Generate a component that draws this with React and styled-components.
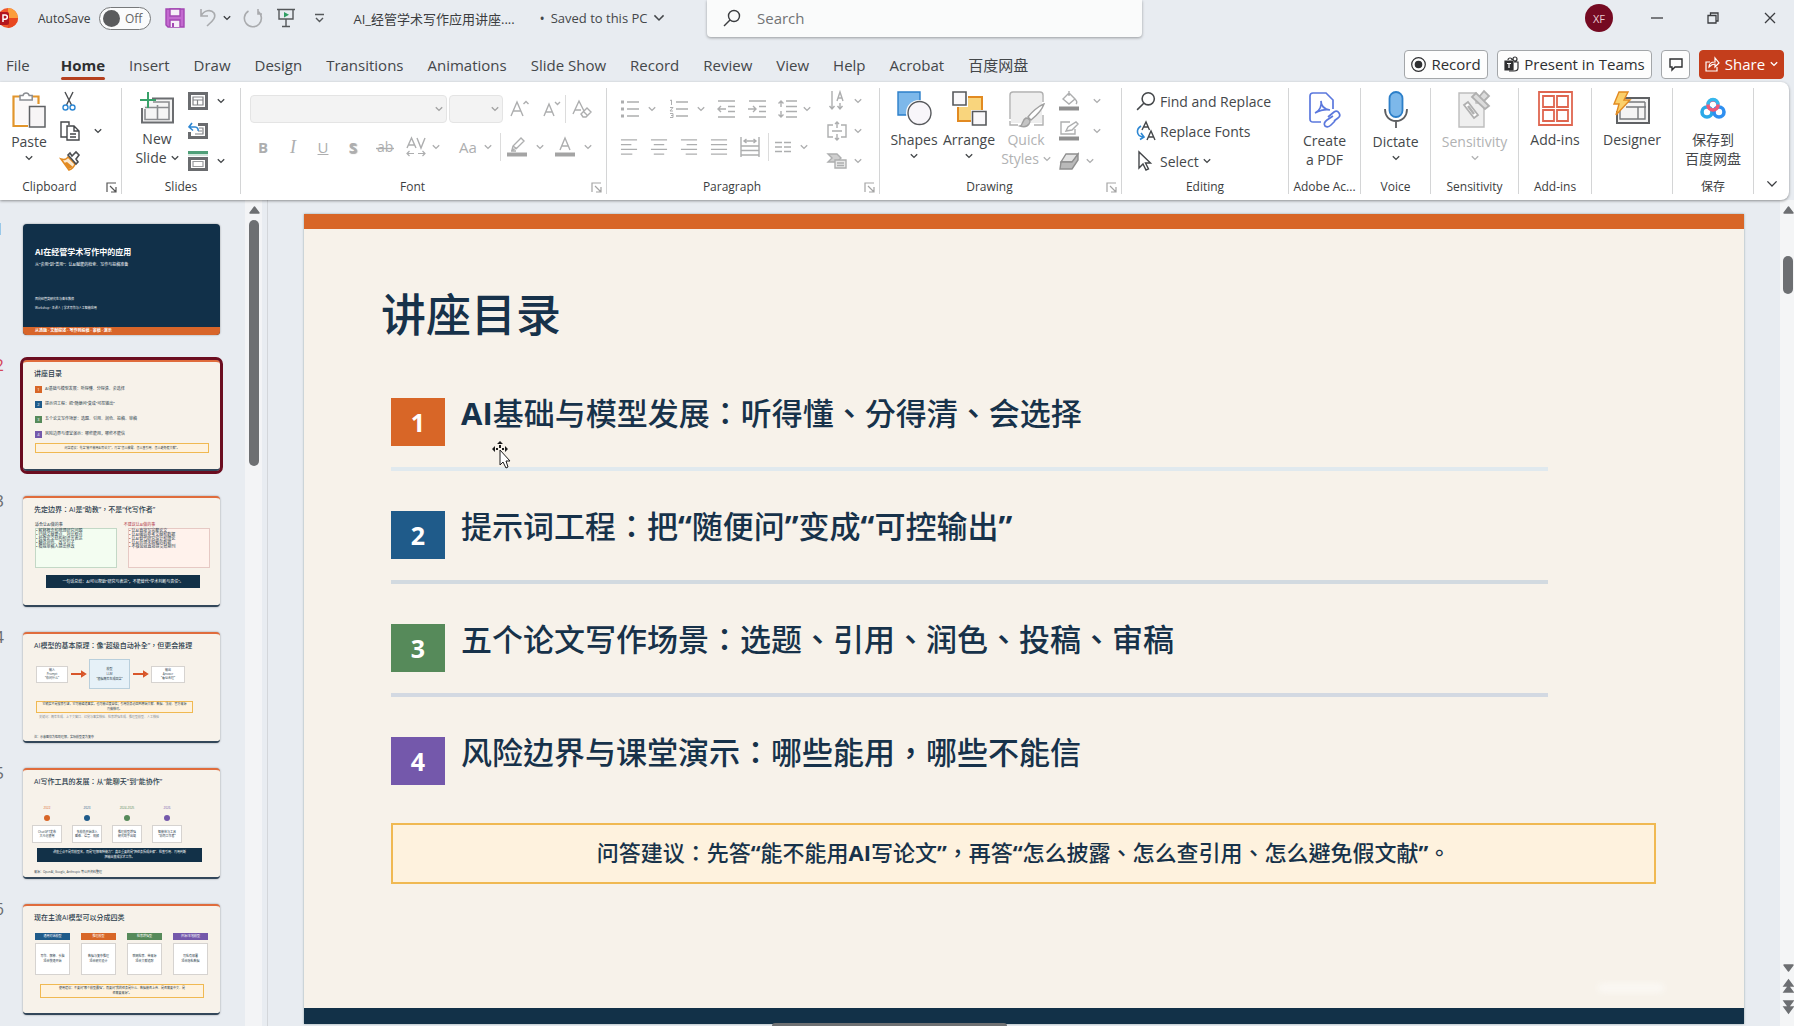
import React, {useState} from 'react'
import styled, {createGlobalStyle} from 'styled-components'

const GlobalStyle = createGlobalStyle`
  * { box-sizing: border-box; }
  body {
    margin: 0;
    overflow: hidden;
    background: #e8ecf1;
    color: #3b3d40;
    font-family: "Open Sans", "Noto Sans CJK SC", sans-serif;
    font-size: 14px;
  }
  button, input, select { font: inherit; color: inherit; }
  button { border: 0; padding: 0; background: none; }
  svg { display: block; flex: none; overflow: visible; }
`

const Window = styled.div`
  display: flex;
  flex-direction: column;
  height: 100vh;
`

/* title bar */
const TitleBar = styled.header`
  display: grid;
  grid-template-columns: 707px minmax(200px, 435px) 1fr;
  height: 46px;
  align-items: start;
`
const TitleLeft = styled.div`
  display: flex;
  align-items: center;
  height: 36px;
  font-size: 13px;
  white-space: nowrap;
`
const AutoSave = styled.label`
  display: flex;
  align-items: center;
  gap: 9px;
  margin: 0 14px 0 20px;
  font-size: 12px;
`
const Switch = styled.span`
  position: relative;
  display: flex;
  align-items: center;
  justify-content: flex-end;
  width: 52px;
  height: 23px;
  padding-right: 8px;
  border: 1px solid #77797b;
  border-radius: 12px;
  background: #fafbfc;
  color: #666;
  input {
    position: absolute;
    left: 3px;
    top: 2px;
    width: 17px;
    height: 17px;
    margin: 0;
    border-radius: 50%;
    background: #5a5b5d;
    appearance: none;
  }
`
const QuickButton = styled.button`
  display: flex;
  align-items: center;
  justify-content: center;
  width: ${p => p.$w || 20}px;
  height: 28px;
  margin-right: ${p => p.$gap || 0}px;
`
const DocName = styled.span`
  width: 186px;
`
const SearchBox = styled.label`
  display: flex;
  align-items: center;
  gap: 14px;
  height: 37px;
  padding: 0 0 2px 16px;
  border-radius: 0 0 4px 4px;
  background: #fafbfb;
  box-shadow: 0 1px 3px rgba(0, 0, 0, 0.35);
  input {
    flex: 1;
    min-width: 0;
    border: 0;
    background: none;
    outline: none;
    font-size: 15px;
    &::placeholder { color: #727476; opacity: 1; }
  }
`
const WindowControls = styled.div`
  display: flex;
  justify-content: flex-end;
  align-items: center;
  height: 36px;
  padding-right: 9px;
`
const Avatar = styled.button`
  width: 28px;
  height: 28px;
  margin-right: 29px;
  border-radius: 50%;
  background: #750a22;
  color: #e8ccd2;
  font-size: 11px;
`
const ControlButton = styled.button`
  display: flex;
  justify-content: center;
  width: 30px;
  margin-left: ${p => p.$gap || 0}px;
`

/* tabs */
const TabBar = styled.nav`
  display: flex;
  align-items: center;
  justify-content: space-between;
  height: 36px;
  padding: 0 10px 0 6px;
`
const Tabs = styled.div`
  display: flex;
  align-items: flex-end;
  gap: 24px;
  height: 36px;
  padding-bottom: 2px;
`
const Tab = styled.button`
  height: 27px;
  white-space: nowrap;
  font-size: 15px;
  line-height: 24px;
  font-weight: ${p => (p.$active ? 700 : 400)};
  color: ${p => (p.$active ? '#2e2f31' : '#44474a')};
  &:first-child { padding-right: 7px; }
  &::after {
    content: "";
    display: block;
    height: 3px;
    border-radius: 2px;
    background: ${p => (p.$active ? '#b5401f' : 'transparent')};
  }
`
const TabActions = styled.div`
  display: flex;
  gap: 9px;
`
const ActionButton = styled.button`
  display: flex;
  align-items: center;
  justify-content: center;
  gap: 5px;
  width: ${p => p.$w}px;
  height: 29px;
  border: 1px solid ${p => (p.$primary ? '#c43e1c' : '#a3a6a9')};
  border-radius: 4px;
  background: ${p => (p.$primary ? '#c43e1c' : '#fdfdfd')};
  color: ${p => (p.$primary ? '#fff' : '#2e2f31')};
  font-size: 15px;
  white-space: nowrap;
`

/* ribbon */
const Ribbon = styled.section`
  display: flex;
  flex: none;
  height: 118px;
  margin-right: 5px;
  padding: 6px 0;
  border-radius: 0 8px 8px 0;
  background: #fff;
  box-shadow: 0 1px 3px rgba(0, 0, 0, 0.4);
  z-index: 1;
`
const GroupBox = styled.div`
  display: flex;
  flex-direction: column;
  flex: none;
  width: ${p => p.$w}px;
  border-right: 1px solid #d4d5d6;
`
const GroupBody = styled.div`
  display: flex;
  flex: 1;
  padding-left: ${p => p.$pad || 0}px;
  justify-content: ${p => (p.$center ? 'center' : 'flex-start')};
`
const GroupFooter = styled.div`
  display: flex;
  align-items: center;
  height: 14px;
  font-size: 12px;
  line-height: 14px;
  text-align: center;
  white-space: nowrap;
  span { flex: 1; }
  button {
    display: flex;
    justify-content: flex-end;
    width: 22px;
    padding-right: 4px;
    color: ${p => (p.$dim ? '#a5a5a5' : '#555')};
  }
`
const BigButton = styled.button`
  display: flex;
  flex-direction: column;
  align-items: center;
  width: ${p => p.$w}px;
  height: 84px;
  color: ${p => (p.disabled ? '#b1b2b3' : '#44474a')};
  font-size: 14px;
  line-height: 19px;
  white-space: nowrap;
  > svg:first-child { margin: 3px 0 4px; }
  > svg:last-child { margin-top: 4px; }
`
const LabelRow = styled.span`
  display: flex;
  align-items: center;
  gap: 4px;
`
const Stack = styled.div`
  display: grid;
  grid-template-rows: repeat(3, 30px);
  align-content: start;
  width: ${p => p.$w}px;
  margin-left: ${p => p.$left || 0}px;
`
const Rows = styled.div`
  display: grid;
  grid-template-rows: 42px 34px;
  align-content: start;
`
const ToolRow = styled.div`
  display: flex;
  align-items: center;
`
const Tool = styled.button`
  display: flex;
  align-items: center;
  gap: ${p => p.$gap || 7}px;
  width: ${p => p.$w}px;
  height: 26px;
  color: ${p => (p.disabled ? '#adaeaf' : '#44474a')};
  font-size: 14px;
  white-space: nowrap;
`
const Glyph = styled.span`
  min-width: 26px;
  text-align: center;
  font-size: ${p => p.$size || 15}px;
  font-weight: ${p => (p.$bold ? 700 : 400)};
  font-style: ${p => (p.$italic ? 'italic' : 'normal')};
  font-family: ${p => (p.$italic ? '"Liberation Serif", serif' : 'inherit')};
  text-decoration: ${p => p.$line || 'none'};
  text-shadow: ${p => (p.$shadow ? '1px 1px 1px #aaa' : 'none')};
`
const Rule = styled.span`
  width: 1px;
  height: 28px;
  margin-right: 6px;
  background: #dcdcdc;
`
const SelectWrap = styled.span`
  position: relative;
  width: ${p => p.$w}px;
  height: 28px;
  margin-right: ${p => p.$gap}px;
  select {
    width: 100%;
    height: 100%;
    border: 1px solid #d9d9d9;
    border-radius: 4px;
    background: #eeeeee;
    appearance: none;
  }
  svg { position: absolute; right: 4px; top: 11px; color: #a2a2a2; pointer-events: none; }
`
const RibbonEnd = styled.div`
  display: flex;
  flex: 1;
  align-items: flex-end;
  justify-content: center;
  padding-bottom: 6px;
`

/* workspace */
const Workspace = styled.main`
  display: grid;
  grid-template-columns: 245px 23px 1fr 14px;
  flex: 1;
  min-height: 0;
`
const ThumbList = styled.ol`
  display: flex;
  flex-direction: column;
  gap: 25px;
  margin: 0;
  padding: 24px 0 0;
  overflow: hidden;
  list-style: none;
`
const ThumbItem = styled.li`
  display: grid;
  grid-template-columns: 4px 197px;
  column-gap: 19px;
  flex: none;
  height: 111px;
`
const ThumbNumber = styled.span`
  display: flex;
  justify-content: flex-end;
  height: 18px;
  font-size: 17px;
  line-height: 10px;
  color: ${p => (p.$active ? '#d5485a' : '#6b6d70')};
`
const Thumb = styled.button`
  display: flex;
  flex-direction: column;
  height: 111px;
  overflow: hidden;
  border-top: ${p => (p.$dark ? 0 : 2)}px solid #e06c3c;
  border-bottom: ${p => (p.$dark ? 0 : 2)}px solid #33475a;
  border-radius: 4px;
  background: ${p => (p.$dark ? '#113049' : '#f7f2ea')};
  color: ${p => (p.$dark ? '#fff' : '#2c3d4c')};
  text-align: left;
  white-space: nowrap;
  box-shadow: 0 0 2px rgba(0, 0, 0, 0.4);
  outline: ${p => (p.$active ? '3px solid #6b0d20' : 'none')};
`
const MiniTitle = styled.span`
  height: 14px;
  margin: ${p => p.$top || 6}px 0 0 ${p => p.$left || 11}px;
  font-family: "Open Sans", "Noto Sans CJK TC", sans-serif;
  font-size: ${p => p.$size || 7}px;
  line-height: 12px;
  font-weight: ${p => (p.$bold ? 700 : 500)};
`
const MiniText = styled.span`
  display: block;
  margin: ${p => p.$top || 0}px 0 0 ${p => p.$left || 0}px;
  font-size: ${p => p.$size || 4}px;
  line-height: ${p => p.$lh || 5}px;
  color: ${p => p.$color || 'inherit'};
  text-align: ${p => (p.$center ? 'center' : 'left')};
`
const MiniStrip = styled.span`
  height: 8px;
  margin-top: auto;
  padding-left: 12px;
  background: #d8652a;
  font-size: 4px;
  line-height: 8px;
  font-weight: 700;
`
const MiniRow = styled.span`
  display: flex;
  align-items: ${p => p.$align || 'flex-start'};
  gap: ${p => p.$gap}px;
  margin: ${p => p.$top || 0}px 0 0 ${p => p.$left || 12}px;
`
const MiniBadge = styled.span`
  width: 7px;
  height: 7px;
  background: ${p => p.$color};
  color: #fff;
  font-size: 4px;
  line-height: 7px;
  text-align: center;
`
const MiniBox = styled.span`
  flex: none;
  display: flex;
  flex-direction: column;
  justify-content: ${p => (p.$start ? 'flex-start' : 'center')};
  width: ${p => p.$w}px;
  height: ${p => p.$h}px;
  margin: ${p => p.$top || 0}px 0 0 ${p => p.$left || 0}px;
  border: 1px solid ${p => p.$line || '#d6d3d0'};
  background: ${p => p.$bg || '#fff'};
  color: ${p => p.$color || 'inherit'};
`
const Dot = styled.span`
  width: 6px;
  height: 6px;
  border-radius: 50%;
  background: ${p => p.$color};
`
const MiniColumn = styled.span`
  display: flex;
  flex-direction: column;
  align-items: center;
  justify-content: flex-end;
  gap: ${p => p.$gap}px;
  height: ${p => p.$h}px;
`

const ScrollTrack = styled.div`
  display: flex;
  flex-direction: column;
  align-items: center;
  padding: 6px ${p => p.$right || 0}px 12px ${p => p.$left || 0}px;
  border-right: ${p => (p.$edge ? '1px solid #d3d6da' : '0')};
  background: ${p => (p.$edge ? 'linear-gradient(90deg, #f3f4f6 17px, #e8ecf1 17px)' : '#f4f5f6')};
  color: #6d6f72;
`
const ScrollThumb = styled.div`
  width: 10px;
  height: ${p => p.$h}px;
  margin: ${p => p.$top}px 0 auto;
  border-radius: 5px;
  background: #6d6f72;
`
const ScrollArrows = styled.div`
  display: flex;
  flex-direction: column;
  gap: 7px;
`

const Canvas = styled.section`
  position: relative;
  padding: 14px 36px 0;
  overflow: hidden;
`
const Slide = styled.article`
  position: relative;
  display: flex;
  flex-direction: column;
  aspect-ratio: 16 / 9;
  border-top: 15px solid #d86627;
  border-bottom: 16px solid #123148;
  background: #f7f2ea;
  color: #17324a;
  font-family: "Open Sans", "Noto Sans CJK TC", sans-serif;
  box-shadow: 0 0 2px rgba(60, 90, 90, 0.5);
`
const SlideTitle = styled.h1`
  margin: 54px 0 0 77px;
  font-size: 45px;
  line-height: 64px;
  font-weight: 500;
`
const Agenda = styled.ol`
  margin: 51px 196px 0 87px;
  padding: 0;
  list-style: none;
`
const AgendaItem = styled.li`
  display: flex;
  align-items: flex-start;
  gap: 16px;
  height: ${p => (p.$line ? 73 : 48)}px;
  margin-bottom: ${p => (p.$line ? 40 : 0)}px;
  border-bottom: ${p => (p.$line ? `4px solid ${p.$line}` : 0)};
  font-size: 31px;
  line-height: 30px;
  font-weight: 500;
  white-space: nowrap;
`
const Badge = styled.span`
  width: 54px;
  height: 48px;
  background: ${p => p.$color};
  color: #fff;
  font-size: 25px;
  line-height: 48px;
  font-weight: 700;
  text-align: center;
`
const Advice = styled.p`
  margin: 38px 88px 0 87px;
  height: 61px;
  border: 2px solid #f0b952;
  background: #fef2de;
  font-size: 22px;
  line-height: 54px;
  font-weight: 500;
  text-align: center;
  white-space: nowrap;
`
const Latin = styled.b`
  font-weight: 700;
`
const Watermark = styled.span`
  position: absolute;
  right: 80px;
  bottom: 16px;
  width: 66px;
  height: 8px;
  border-radius: 4px;
  background: #fff;
  opacity: 0.5;
  filter: blur(3px);
`
const Pointer = styled.svg`
  position: absolute;
  left: 188px;
  top: 212px;
`
const Handle = styled.div`
  position: absolute;
  left: 504px;
  bottom: 0;
  width: 235px;
  height: 3px;
  border-radius: 3px 3px 0 0;
  background: #6f7173;
`

/* icons */
const Svg = ({w = 20, h = w, box, sw = 1.4, children}) => (
  <svg width={w} height={h} viewBox={box || `0 0 ${w} ${h}`} fill="none" stroke="currentColor" strokeWidth={sw} aria-hidden="true">
    {children}
  </svg>
)

const Chevron = ({w = 8, sw = 1.7}) => (
  <Svg w={w} h={Math.round(w * 0.7)} box="0 0 10 7" sw={sw}><path d="M1 1.2l4 4 4-4" /></Svg>
)
const Launcher = () => (
  <Svg w={11} sw={1.2}><path d="M1 10V1h9M4 4l6 6M10 5v5H5" /></Svg>
)
const Triangle = ({down}) => (
  <Svg w={11} h={8}><path d={down ? 'M1 1h9L5.500 7z' : 'M1 7h9L5.500 1z'} fill="currentColor" strokeLinejoin="round" /></Svg>
)
const DoubleTriangle = ({down}) => (
  <Svg w={11} h={14}>
    <path d={down ? 'M1 1h9L5.500 7zM1 7h9l-4.500 6z' : 'M1 7h9L5.500 1zM1 13h9L5.500 7z'} fill="currentColor" strokeWidth="1.400" />
  </Svg>
)
const AppLogo = () => (
  <svg width="18" height="20" viewBox="0 0 18 20" aria-hidden="true">
    <circle cx="8" cy="10" r="10" fill="#f0572b" />
    <path d="M8 0a10 10 0 0 1 10 10H8z" fill="#fb9d3b" />
    <path d="M18 10a10 10 0 0 1-10 10V10z" fill="#e8471f" />
    <rect x="-4" y="4" width="13" height="13" rx="2" fill="#b3151d" />
    <path d="M3 14V7h2.200a2 2 0 0 1 0 4.200H3" fill="none" stroke="#fff" strokeWidth="1.500" />
  </svg>
)
const SaveIcon = () => (
  <Svg w={20}>
    <path d="M1 1h18v18H3l-2-2z" fill="#c36ad0" stroke="#a347b3" />
    <path d="M5 1h10v7H5z" fill="#f6eef8" stroke="#a347b3" />
    <path d="M5 19v-7h10v7" fill="#f6eef8" stroke="#a347b3" />
    <path d="M8 15v4" stroke="#a347b3" strokeWidth="2" />
  </Svg>
)
const UndoIcon = () => <Svg w={18} h={20}><path d="M2 1v7h7M2 8C5 2 12 1 15 5c3 5-3 9-7 13" stroke="#a9abae" strokeWidth="1.600" /></Svg>
const RedoIcon = () => <Svg w={20}><path d="M15 1v5h4M5.500 3A8.500 8.500 0 1 0 15 3.500" stroke="#a9abae" strokeWidth="1.600" /></Svg>
const PresentIcon = () => (
  <Svg w={18} h={20}>
    <path d="M0 1.500h18M2 2v9h14V2M9 11v7M5 18.500h8" stroke="#55585b" />
    <path d="M7 4l5 2.800L7 9.500z" fill="#2f9e63" stroke="none" />
  </Svg>
)
const CustomizeIcon = () => <Svg w={9} h={10}><path d="M0 1.500h9M1 5l3.500 3.500L8 5" stroke="#55585b" /></Svg>
const SearchIcon = ({w = 18}) => <Svg w={w} box="0 0 18 18"><circle cx="11" cy="7" r="5.500" /><path d="M7 11l-6 6" /></Svg>

const PasteIcon = () => (
  <Svg w={34} h={37} sw={1.5}>
    <path d="M16 35H1.500V5.500H8M20 5.500h6.500V13" stroke="#e2952c" strokeWidth="2.200" />
    <path d="M3.500 7.500H25V33H3.500z" fill="#fbf8f8" stroke="none" />
    <path d="M8 9V4.500h3a3.200 3.200 0 0 1 6.200 0h3V9z" fill="#fff" stroke="#8a8d92" />
    <path d="M17.500 15.500h15.500v20.500H17.500z" fill="#f7f5f6" stroke="#5f6164" />
  </Svg>
)
const CutIcon = () => (
  <Svg w={18} h={19}>
    <path d="M5 0l6.500 13M13 0L6.500 13" stroke="#4b4d50" />
    <circle cx="5.500" cy="15.500" r="2.500" stroke="#2d87d3" /><circle cx="12.500" cy="15.500" r="2.500" stroke="#2d87d3" />
  </Svg>
)
const CopyIcon = () => (
  <Svg w={20}>
    <path d="M7 16H1V1h8v3" /><path d="M7 5h7l5 5v9H7zM14 5v5h5M10 13h6M10 16h6" />
  </Svg>
)
const PainterIcon = () => (
  <Svg w={20}>
    <path d="M1 8l8 11c3-1 5-3 6-6L8 6c-1 2-4 3-7 2z" fill="#fce9cf" stroke="#e28a21" strokeWidth="1.600" />
    <path d="M4 12l5 6 4-2-6-5z" fill="#e28a21" stroke="none" />
    <path d="M8 4l8 9 2-2-2-3 3-4-3-3-4 4-2-3z" fill="#fff" stroke="#4b4d50" strokeWidth="1.600" />
  </Svg>
)
const NewSlideIcon = () => (
  <Svg w={36} h={34} sw={1.6}>
    <path d="M13 7.500h21v24H3V17" fill="#f5f5f5" stroke="#6b6d70" strokeWidth="2" />
    <path d="M18.500 14v15M6 16.500h24M6 18v10.500h24V11H14" stroke="#8a8c8f" />
    <path d="M9 1v16M1 9h16" stroke="#38a169" strokeWidth="2" />
  </Svg>
)
const LayoutIcon = () => (
  <Svg w={20} h={18}>
    <path d="M1.500 1.500h17v15h-17z" stroke="#6a6c6f" strokeWidth="3" /><path d="M5 5h10v8H5zM5 8h10M9.500 8v5" stroke="#808285" strokeWidth="1.200" />
  </Svg>
)
const ResetIcon = () => (
  <Svg w={20} h={18}>
    <path d="M10 2.500h8.500v13h-17V10" stroke="#6a6c6f" strokeWidth="3" /><path d="M11 6h4v6H7M10 9h4" stroke="#808285" strokeWidth="1.200" />
    <path d="M1 5h6a3 3 0 0 1 3 4M4 1L1 5l4 3.500" stroke="#2d87d3" strokeWidth="1.600" />
  </Svg>
)
const SectionIcon = () => (
  <Svg w={20}>
    <path d="M0 1.500h20" stroke="#4f9f78" strokeWidth="3" /><path d="M0 4h20" stroke="#a5ccb8" strokeWidth="1" />
    <path d="M1.500 7.500h17v11h-17z" stroke="#6a6c6f" strokeWidth="3" /><path d="M5 10.500h10v5H5z" stroke="#9a9c9f" strokeWidth="1.200" />
  </Svg>
)
const ClearFormatIcon = () => <Svg w={20}><path d="M1 15L7 2l5 10M3 11h6M9 15l6-6 4 4-5 5h-3zM11 12l4 4" /></Svg>
const GrowIcon = ({down}) => (
  <Svg w={20}>
    {down ? <path d="M3 17L8 5l5 12M4.500 13h7M14 3l2.500 2.500L19 3" /> : <path d="M1 17L7 3l6 14M3 12h8M13.500 5L16 2.500 18.500 5" />}
  </Svg>
)
const MarkIcon = () => (
  <Svg w={20}><path d="M0 17.500h20" strokeWidth="4" stroke="#a4a4a4" /><path d="M5 13l1-4 8-8 3 3-7 7zM6 9l4 3M4 14h5" /></Svg>
)
const FontColorIcon = () => (
  <Svg w={20}><path d="M0 17.500h20" strokeWidth="4" stroke="#a4a4a4" /><path d="M5 13l5-12 5 12M7 9h6" /></Svg>
)
const StrikeIcon = () => (
  <Svg w={18} h={20}>
    <text x="1" y="15" fontSize="14" fill="currentColor" stroke="none">ab</text><path d="M0 11.500h18" />
  </Svg>
)
const SpacingIcon = () => (
  <Svg w={20}>
    <path d="M1 11L5.500 1 10 11M2.500 8h6M11 1l4 10 4-10" />
    <path d="M1 16.500h7M12 16.500h7M3.500 14L1 16.500 3.500 19M16.500 14l2.500 2.500-2.500 2.500" strokeWidth="1.200" />
  </Svg>
)

const BulletsIcon = () => <Svg w={20}><path d="M7 3h12M7 10h12M7 17h12" /><path d="M1 3h3M1 10h3M1 17h3" strokeWidth="3" /></Svg>
const NumbersIcon = () => (
  <Svg w={20}>
    <path d="M7 3h12M7 10h12M7 17h12" />
    <path d="M1 1.500l1.500-.5v5M1 8.500h3L1 12h3M1 14.500h3v4H1M2 16.500h2" strokeWidth="1" />
  </Svg>
)
const IndentIcon = ({out}) => (
  <Svg w={19} h={18}>
    <path d="M1 1h17M11 6.500h7M11 11.500h7M1 17h17" /><path d={out ? 'M9 9H1M4 6L1 9l3 3' : 'M0 9h8M5 6l3 3-3 3'} />
  </Svg>
)
const LineSpacingIcon = () => <Svg w={20}><path d="M9 2h11M9 7.500h11M9 12.500h11M9 18h11M4 2v6M4 12v6M1.500 4.500L4 2l2.500 2.500M1.500 15.500L4 18l2.500-2.500" /></Svg>
const alignPaths = {
  left: 'M1 1.500h17M1 6.500h11M1 11.500h17M1 16.500h12',
  center: 'M1 1.500h17M4 6.500h11M1 11.500h17M4 16.500h11',
  right: 'M1 1.500h17M7 6.500h11M1 11.500h17M6 16.500h12',
  justify: 'M1 1.500h17M1 6.500h17M1 11.500h17M1 16.500h17',
}
const AlignIcon = ({kind}) => <Svg w={18} box="0 0 19 18"><path d={alignPaths[kind]} /></Svg>
const DistributeIcon = () => <Svg w={20}><path d="M1 0v20M19 0v20M4 4h12M6.500 2L4 4l2.500 2M13.500 2L16 4l-2.500 2M1 9h18M1 13.500h18M1 18h18" /></Svg>
const ColumnsIcon = () => <Svg w={16} h={12}><path d="M0 1.500h7M0 6h7M0 10.500h7M9 1.500h7M9 6h7M9 10.500h7" /></Svg>
const DirectionIcon = () => <Svg w={20}><path d="M5 0v18M2.500 15L5 18l2.500-3M13 12v6M10.500 15l2.500 3 2.500-3M10 10l3-9 3 9M11 7h4" /></Svg>
const AlignTextIcon = () => <Svg w={20} h={18}><path d="M6 3H1v12h5M14 3h5v12h-5M5 9h10M10 0v6M10 12v6M8 2l2-2 2 2M8 16l2 2 2-2" /></Svg>
const SmartArtIcon = () => (
  <Svg w={20} h={16}><path d="M1 1h9l4 4-4 4H1l4-4z" fill="#cfcfcf" /><path d="M8 7h11v8H8zM10 10h7M10 12.500h7" fill="#e9e9e9" /></Svg>
)

const ShapesIcon = () => (
  <Svg w={35}>
    <path d="M1 1h22v23H1z" fill="#7db8ea" stroke="#2c7fc9" /><circle cx="22" cy="22" r="13" fill="#fff" stroke="none" />
    <circle cx="22.500" cy="22" r="11.500" fill="#f8f6fa" stroke="#57595c" />
  </Svg>
)
const ArrangeIcon = () => (
  <Svg w={35}>
    <path d="M6 6h24v24H6z" fill="#f9d57d" stroke="#e28a21" strokeWidth="2" />
    <path d="M0 0h16v16H0zM19 19h16v16H19z" fill="#fff" stroke="none" />
    <path d="M1 1h13v13H1zM20.500 20.500h13.500v13.500H20.500z" fill="#f9f8fa" stroke="#57595c" strokeWidth="1.600" />
  </Svg>
)
const QuickStylesIcon = () => (
  <Svg w={35}>
    <path d="M2 2h31v30H2z" fill="#eeeeee" stroke="none" />
    <path d="M1 28V4q0-3 3-3h27q3 0 3 3v7M1 30v4h8M34 24v10h-9" stroke="#b0b0b0" />
    <path d="M35 13c-6 2-13 9-16 13l3 3c5-4 11-10 13-16z" fill="#fff" stroke="#a0a0a0" />
    <path d="M11 35c3-1 2-6 6-8 4 0 5 4 3 6-2 3-6 3-9 2z" fill="#c4c4c4" stroke="#a0a0a0" />
  </Svg>
)
const FillIcon = () => <Svg w={20}><path d="M0 17.500h20" strokeWidth="4" stroke="#8f8f8f" /><path d="M4 8l6-6 6 6-6 5zM10 0v5M16 8c2 2 2 4 1 5" /></Svg>
const OutlineIcon = () => <Svg w={20}><path d="M0 17.500h20" strokeWidth="4" stroke="#8f8f8f" /><path d="M11 1H2v12h14V8M7 10l2-4 8-5 2 2-6 6z" /></Svg>
const EffectsIcon = () => <Svg w={20} h={17}><path d="M7 1h12l-5 8H2z" fill="#e3e3e3" stroke="#8f8f8f" /><path d="M2 9h11l6-8v6l-6 9H1z" fill="#b9b9b9" stroke="#8f8f8f" /></Svg>
const ReplaceFontsIcon = () => (
  <Svg w={20}><path d="M6 9l4-8 3.500 8M7.500 6h4.500M11 19l4-9 4 9M12.500 16h5" /><path d="M5 5c-5 3-5 10 2 11M4 18.500L8 16l-3-4" stroke="#2d87d3" strokeWidth="1.600" /></Svg>
)
const SelectIcon = () => <Svg w={20}><path d="M3 1v16l4-4 3 6 2.500-1-3-6h5z" /></Svg>
const PdfIcon = () => (
  <Svg w={32} h={36} sw={1.7}>
    <path d="M12 31H4q-3 0-3-3V5q0-3 3-3h13l7 7v9" stroke="#5b78dd" />
    <path d="M6 22c5-2 7-8 6-12 0 5 3 8 9 9-5-1-11 1-15 3z" stroke="#5b78dd" />
    <path d="M19 26l6-5q3-2 5 1t-1 5l-4 3M24 25l-6 4q-4 3-2 6 3 2 6-1l4-4" stroke="#5b78dd" />
  </Svg>
)
const MicIcon = () => (
  <Svg w={24} h={37} sw={1.8}>
    <rect x="5.500" y="1" width="13" height="25" rx="6.500" fill="#7db8ea" stroke="#2c7fc9" />
    <path d="M1 18c0 7 4 12 11 12s11-5 11-12M12 30v7" stroke="#5c5e61" />
  </Svg>
)
const SensitivityIcon = () => (
  <Svg w={33} h={37}>
    <path d="M1 2h17v10h8v24H1z" fill="#efefef" stroke="#bdbdbd" />
    <path d="M6 14l4-3 10 13-4 3z" fill="#fff" stroke="#b0b0b0" strokeWidth="1.800" /><path d="M10 15l6 8" stroke="#b0b0b0" strokeWidth="2.500" />
    <path d="M14 6l4-4 13 13-4 3zM21 6l5-6 5 5-5 5" fill="#dcdcdc" stroke="#b0b0b0" strokeWidth="1.800" />
  </Svg>
)
const AddInsIcon = () => <Svg w={35} sw={1.8}><path d="M1 1h33v33H1zM5 5h11v11H5zM19 5h11v11H19zM5 19h11v11H5zM19 19h11v11H19z" stroke="#df6650" /></Svg>
const DesignerIcon = () => (
  <Svg w={38} h={35}>
    <path d="M12 7h24v25H4V20" fill="#f4f4f4" stroke="#5f6164" strokeWidth="2" /><path d="M14 11h18M13 16h20M7 16v12h25V11M25 16v12" stroke="#77797c" />
    <path d="M6 1h9l-4 8h6L3 24l3-11H1z" fill="#fbd06b" stroke="#e28a21" />
  </Svg>
)
const NetdiskIcon = () => (
  <Svg w={26} h={35} sw={3.6}>
    <circle cx="7" cy="21" r="5" stroke="#2aa9e8" /><circle cx="19" cy="21" r="5" stroke="#2f8ff0" />
    <circle cx="13" cy="14" r="5" stroke="#ef5a77" /><path d="M8 13.500a5 5 0 0 1 10 0" stroke="#35b8ee" />
  </Svg>
)
const RecordIcon = () => <Svg w={15} sw={1.2}><circle cx="7.500" cy="7.500" r="6.800" /><circle cx="7.500" cy="7.500" r="3.200" fill="currentColor" /></Svg>
const TeamsIcon = () => (
  <Svg w={15} h={16} sw={1.2}>
    <path d="M1 5h8v9H1z" fill="currentColor" /><path d="M4 4a2 2 0 1 1 4 0M10 6h4v6q0 3-4 3H5M9 3a2 2 0 1 0 4 0 2 2 0 0 0-4 0" />
    <path d="M3 7.500h4M5 7.500V12" stroke="#fff" />
  </Svg>
)
const CommentIcon = () => <Svg w={14} h={13}><path d="M1 1h12v8H6l-3 3V9H1z" /></Svg>
const ShareIcon = () => <Svg w={15} sw={1.2}><path d="M5 5H1v9h11v-4M4 10c0-4 3-5 6-5V1l4 5-4 4V7c-3 0-4 1-6 3z" /></Svg>

const tabs = ['File', 'Home', 'Insert', 'Draw', 'Design', 'Transitions', 'Animations', 'Slide Show', 'Record', 'Review', 'View', 'Help', 'Acrobat', '百度网盘']

const agenda = [
  {text: 'AI基础与模型发展：听得懂、分得清、会选择', color: '#d86627', line: '#e0e9ee'},
  {text: '提示词工程：把“随便问”变成“可控输出”', color: '#1f5b8a', line: '#d2dae0'},
  {text: '五个论文写作场景：选题、引用、润色、投稿、审稿', color: '#568a5a', line: '#d3d9e2'},
  {text: '风险边界与课堂演示：哪些能用，哪些不能信', color: '#7458ab'},
]
const advice = '问答建议：先答“能不能用AI写论文”，再答“怎么披露、怎么查引用、怎么避免假文献”。'

// latin letters and quotes are set bold, the CJK around them medium
const Mixed = ({children}) => (
  <span>
    {children.split(/(AI|[“”])/).map((part, i) => (i % 2 ? <Latin key={i}>{part}</Latin> : part))}
  </span>
)

const Group = ({w, label, launcher, dim, pad, center, children}) => (
  <GroupBox $w={w}>
    <GroupBody $pad={pad} $center={center}>{children}</GroupBody>
    <GroupFooter $dim={dim}>
      <span>{label}</span>
      {launcher && <button aria-label={`${label} settings`}><Launcher /></button>}
    </GroupFooter>
  </GroupBox>
)

const MenuTool = ({w, icon, label, disabled = true, gap}) => (
  <Tool $w={w} $gap={gap || 9} disabled={disabled} aria-label={label}>{icon}<Chevron /></Tool>
)

const HomeRibbon = () => (
  <Ribbon>
    <Group w={122} label="Clipboard" launcher>
      <BigButton $w={58}><PasteIcon />Paste<Chevron /></BigButton>
      <Stack $w={58} $left={2}>
        <Tool $w={24} aria-label="Cut"><CutIcon /></Tool>
        <MenuTool w={50} gap={14} icon={<CopyIcon />} label="Copy" disabled={false} />
        <Tool $w={24} aria-label="Format Painter"><PainterIcon /></Tool>
      </Stack>
    </Group>
    <Group w={119} label="Slides" pad={9}>
      <BigButton $w={52}><NewSlideIcon />New<LabelRow>Slide<Chevron /></LabelRow></BigButton>
      <Stack $w={46} $left={5}>
        <MenuTool w={44} icon={<LayoutIcon />} label="Layout" disabled={false} />
        <Tool $w={24} aria-label="Reset"><ResetIcon /></Tool>
        <MenuTool w={44} icon={<SectionIcon />} label="Section" disabled={false} />
      </Stack>
    </Group>
    <Group w={366} label="Font" launcher dim pad={9}>
      <Rows>
        <ToolRow>
          <SelectWrap $w={197} $gap={2}><select aria-label="Font name" disabled /><Chevron /></SelectWrap>
          <SelectWrap $w={54} $gap={7}><select aria-label="Font size" disabled /><Chevron /></SelectWrap>
          <Tool $w={31} disabled aria-label="Increase size"><GrowIcon /></Tool>
          <Tool $w={24} disabled aria-label="Decrease size"><GrowIcon down /></Tool>
          <Rule />
          <Tool $w={24} disabled aria-label="Clear formatting"><ClearFormatIcon /></Tool>
        </ToolRow>
        <ToolRow>
          <Tool $w={30} disabled><Glyph $bold>B</Glyph></Tool>
          <Tool $w={30} disabled><Glyph $italic $size={18}>I</Glyph></Tool>
          <Tool $w={30} disabled><Glyph $line="underline">U</Glyph></Tool>
          <Tool $w={36} disabled><Glyph $bold $shadow>S</Glyph></Tool>
          <Tool $w={30} disabled aria-label="Strikethrough"><StrikeIcon /></Tool>
          <MenuTool w={49} gap={6} icon={<SpacingIcon />} label="Character spacing" />
          <MenuTool w={45} gap={3} icon={<Glyph>Aa</Glyph>} label="Change case" />
          <Rule />
          <MenuTool w={48} icon={<MarkIcon />} label="Highlight" />
          <MenuTool w={44} icon={<FontColorIcon />} label="Font colour" />
        </ToolRow>
      </Rows>
    </Group>
    <Group w={273} label="Paragraph" launcher dim pad={13}>
      <Rows>
        <ToolRow>
          <MenuTool w={49} gap={8} icon={<BulletsIcon />} label="Bullets" />
          <MenuTool w={48} gap={8} icon={<NumbersIcon />} label="Numbering" />
          <Tool $w={31} disabled aria-label="Decrease indent"><IndentIcon out /></Tool>
          <Tool $w={29} disabled aria-label="Increase indent"><IndentIcon /></Tool>
          <MenuTool w={50} gap={6} icon={<LineSpacingIcon />} label="Line spacing" />
        </ToolRow>
        <ToolRow>
          {['left', 'center', 'right', 'justify'].map(kind => (
            <Tool key={kind} $w={30} disabled aria-label={`Align ${kind}`}><AlignIcon kind={kind} /></Tool>
          ))}
          <Tool $w={28} disabled aria-label="Distribute"><DistributeIcon /></Tool>
          <Rule />
          <MenuTool w={40} icon={<ColumnsIcon />} label="Columns" />
        </ToolRow>
      </Rows>
      <Stack $w={40}>
        <MenuTool w={40} gap={7} icon={<DirectionIcon />} label="Text direction" />
        <MenuTool w={40} gap={7} icon={<AlignTextIcon />} label="Align text" />
        <MenuTool w={40} gap={7} icon={<SmartArtIcon />} label="Convert to SmartArt" />
      </Stack>
    </Group>
    <Group w={242} label="Drawing" launcher dim pad={8}>
      <BigButton $w={52}><ShapesIcon />Shapes<Chevron /></BigButton>
      <BigButton $w={58}><ArrangeIcon />Arrange<Chevron /></BigButton>
      <BigButton $w={56} disabled><QuickStylesIcon />Quick<LabelRow>Styles<Chevron /></LabelRow></BigButton>
      <Stack $w={50} $left={5}>
        <MenuTool w={46} gap={14} icon={<FillIcon />} label="Shape fill" />
        <MenuTool w={46} gap={14} icon={<OutlineIcon />} label="Shape outline" />
        <MenuTool w={46} gap={7} icon={<EffectsIcon />} label="Shape effects" />
      </Stack>
    </Group>
    <Group w={167} label="Editing" pad={14}>
      <Stack $w={140}>
        <Tool $w={140} $gap={4}><SearchIcon w={20} />Find and Replace</Tool>
        <Tool $w={140} $gap={4}><ReplaceFontsIcon />Replace Fonts</Tool>
        <Tool $w={140} $gap={4}><SelectIcon />Select<Chevron /></Tool>
      </Stack>
    </Group>
    <Group w={72} label="Adobe Ac..." center>
      <BigButton $w={70}><PdfIcon />Create<span>a PDF</span></BigButton>
    </Group>
    <Group w={70} label="Voice" center>
      <BigButton $w={68}><MicIcon />Dictate<Chevron /></BigButton>
    </Group>
    <Group w={88} label="Sensitivity" center>
      <BigButton $w={84} disabled><SensitivityIcon />Sensitivity<Chevron /></BigButton>
    </Group>
    <Group w={73} label="Add-ins" center>
      <BigButton $w={70}><AddInsIcon /><span>Add-ins</span></BigButton>
    </Group>
    <Group w={81} label="" center>
      <BigButton $w={78}><DesignerIcon /><span>Designer</span></BigButton>
    </Group>
    <Group w={81} label="保存" center>
      <BigButton $w={78}><NetdiskIcon /><span>保存到</span><span>百度网盘</span></BigButton>
    </Group>
    <RibbonEnd><button aria-label="Ribbon options"><Chevron w={12} sw={1.2} /></button></RibbonEnd>
  </Ribbon>
)

const CoverThumb = () => (
  <>
    <MiniTitle $top={22} $left={12} $size={8} $bold>AI在经管学术写作中的应用</MiniTitle>
    <MiniText $left={12} $top={2}>从“会用”到“善用”：让AI赋能的检索、写作与投稿准备</MiniText>
    <MiniText $left={12} $top={30} $size={3}>面向经管类研究生与青年教师</MiniText>
    <MiniText $left={12} $top={4} $size={3}>Workshop · 主讲人 | 学术写作与人工智能应用</MiniText>
    <MiniStrip>从选题 · 文献综述 · 写作到投稿 · 审稿 · 演示</MiniStrip>
  </>
)

const AgendaThumb = () => (
  <>
    <MiniTitle>讲座目录</MiniTitle>
    {agenda.map((item, i) => (
      <MiniRow key={item.text} $gap={3} $top={i ? 8 : 4}>
        <MiniBadge $color={item.color}>{i + 1}</MiniBadge>
        <MiniText>{item.text}</MiniText>
      </MiniRow>
    ))}
    <MiniBox $w={174} $h={10} $top={5} $left={12} $line="#f0b952" $bg="#fef2de">
      <MiniText $size={3} $center>{advice}</MiniText>
    </MiniBox>
  </>
)

const BoundaryThumb = () => (
  <>
    <MiniTitle>先定边界：AI是“助教”，不是“代写作者”</MiniTitle>
    <MiniRow $gap={61} $top={4}>
      <MiniText>适合让AI做的事</MiniText>
      <MiniText $color="#b3394a">不建议让AI做的事</MiniText>
    </MiniRow>
    <MiniRow $gap={11} $top={1}>
      <MiniBox $w={82} $h={40} $bg="#f3fdf1" $line="#c3d8c6" $start>
        <MiniText $lh={4}>• 解释概念和梳理研究问题<br />• 归纳文献要点、对比观点<br />• 检查论文结构和语言表达<br />• 翻译润色、改写句子<br />• 模拟审稿人提出修改</MiniText>
      </MiniBox>
      <MiniBox $w={82} $h={40} $bg="#fff2ec" $line="#e6c9c4" $start>
        <MiniText $lh={4}>• 让AI直接写完整论文<br />• 让AI编造参考文献和数据<br />• 让AI替代研究设计和理论<br />• 让AI处理未脱敏的数据<br />• 不核验就直接提交给期刊</MiniText>
      </MiniBox>
    </MiniRow>
    <MiniBox $w={154} $h={13} $top={7} $left={23} $line="#123148" $bg="#123148" $color="#fff">
      <MiniText $center>一句话总结：AI可以帮助“研究与表达”，不能替代“学术判断与责任”。</MiniText>
    </MiniBox>
  </>
)

const PrincipleThumb = () => (
  <>
    <MiniTitle>AI模型的基本原理：像“超级自动补全”，但更会推理</MiniTitle>
    <MiniRow $gap={3} $top={5} $left={13} $align="center">
      <MiniBox $w={32} $h={17}><MiniText $size={3} $lh={4} $center>输入<br />Prompt<br />“你问什么”</MiniText></MiniBox>
      <Svg w={15} h={6} sw={2}><path d="M0 3h11M11 1l3 2-3 2z" stroke="#d8562a" /></Svg>
      <MiniBox $w={41} $h={30} $bg="#e6f1f8" $line="#b9cfdc"><MiniText $size={3} $center>模型<br />LLM<br />“根据概率生成回答”</MiniText></MiniBox>
      <Svg w={15} h={6} sw={2}><path d="M0 3h11M11 1l3 2-3 2z" stroke="#d8562a" /></Svg>
      <MiniBox $w={34} $h={17}><MiniText $size={3} $lh={4} $center>输出<br />Answer<br />“看似合理”</MiniText></MiniBox>
    </MiniRow>
    <MiniBox $w={157} $h={12} $top={12} $left={13} $line="#f0b952" $bg="#fef2de">
      <MiniText $size={3} $center>它确实不是搜索引擎，它可能编造事实，也可能过度自信；引用前务必回到原始文献、数据、法规、官方来源<br />再做核对。</MiniText>
    </MiniBox>
    <MiniText $size={3} $left={16} $top={2} $color="#8a8f94">关键词：概率生成、上下文窗口、幻觉与事实核验、检索增强生成、推理型模型、人工核验</MiniText>
    <MiniText $size={3} $left={11} $top={15}>注：示意图仅为帮助理解，实际模型更为复杂</MiniText>
  </>
)

const years = [
  {year: '2022', color: '#d86627', text: ['ChatGPT发布', '大众化使用']},
  {year: '2023', color: '#1f5b8a', text: ['多模态开始进入', '图像、语音、视频']},
  {year: '2024-2025', color: '#568a5a', text: ['推理模型增强', '研究助手出现']},
  {year: '2026', color: '#7458ab', text: ['智能体与工具', '“协同工作者”']},
]

const TimelineThumb = () => (
  <>
    <MiniTitle>AI写作工具的发展：从“能聊天”到“能协作”</MiniTitle>
    <MiniRow $gap={10} $top={12} $left={9}>
      {years.map(y => (
        <MiniColumn key={y.year} $gap={4} $h={41}>
          <MiniText $size={3} $color={y.color}>{y.year}</MiniText>
          <Dot $color={y.color} />
          <MiniBox $w={30} $h={18}><MiniText $size={3} $lh={4} $center>{y.text[0]}<br />{y.text[1]}</MiniText></MiniBox>
        </MiniColumn>
      ))}
    </MiniRow>
    <MiniBox $w={165} $h={14} $top={5} $left={14} $line="#123148" $bg="#123148" $color="#fff">
      <MiniText $size={3} $center>讲座重点不是背模型名，而是“理解每种能力”：真正重要的是“把任务拆成步骤”、检查引用、再用判断<br />把输出变成学术工作。</MiniText>
    </MiniBox>
    <MiniText $size={3} $left={11} $top={8}>来源：OpenAI, Google, Anthropic 等公开资料整理</MiniText>
  </>
)

const kinds = [
  {name: '通用对话模型', color: '#1f5b8a', text: ['写作、解释、头脑', '适合快速开始']},
  {name: '推理模型', color: '#d86627', text: ['数据与复杂推理', '适合研究设计']},
  {name: '检索增强型', color: '#568a5a', text: ['联网检索、带来源', '适合文献追踪']},
  {name: '开源/本地模型', color: '#7458ab', text: ['可私有部署', '适合隐私数据']},
]

const KindsThumb = () => (
  <>
    <MiniTitle>现在主流AI模型可以分成四类</MiniTitle>
    <MiniRow $gap={11} $top={7}>
      {kinds.map(k => (
        <MiniColumn key={k.name} $gap={3} $h={42}>
          <MiniBox $w={35} $h={7} $bg={k.color} $line={k.color} $color="#fff"><MiniText $size={3} $center>{k.name}</MiniText></MiniBox>
          <MiniBox $w={35} $h={32}><MiniText $size={3} $center>{k.text[0]}<br />{k.text[1]}</MiniText></MiniBox>
        </MiniColumn>
      ))}
    </MiniRow>
    <MiniBox $w={164} $h={14} $top={9} $left={17} $line="#f0b952" $bg="#fef2de">
      <MiniText $size={3} $center>使用建议：不要问“哪个模型最强”，而要问“我的任务是什么、数据能否上传、是否需要中文、是<br />否需要来源”。</MiniText>
    </MiniBox>
  </>
)

const thumbs = [CoverThumb, AgendaThumb, BoundaryThumb, PrincipleThumb, TimelineThumb, KindsThumb]

const App = () => {
  const [tab, setTab] = useState('Home')
  const [current, setCurrent] = useState(1)

  return (
    <Window>
      <GlobalStyle />
      <TitleBar>
        <TitleLeft>
          <AppLogo />
          <AutoSave>AutoSave<Switch><input type="checkbox" />Off</Switch></AutoSave>
          <QuickButton $gap={14} aria-label="Save"><SaveIcon /></QuickButton>
          <QuickButton $w={18} $gap={6} aria-label="Undo"><UndoIcon /></QuickButton>
          <QuickButton $w={8} $gap={12} aria-label="Undo history"><Chevron /></QuickButton>
          <QuickButton $gap={14} aria-label="Redo"><RedoIcon /></QuickButton>
          <QuickButton $w={18} $gap={20} aria-label="Start slide show"><PresentIcon /></QuickButton>
          <QuickButton $w={9} $gap={29} aria-label="Customize"><CustomizeIcon /></QuickButton>
          <DocName>AI_经管学术写作应用讲座....</DocName>
          <Tool $gap={6}><span>•</span><Glyph $size={13}>Saved to this PC</Glyph><Chevron w={12} sw={1.3} /></Tool>
        </TitleLeft>
        <SearchBox>
          <SearchIcon />
          <input type="text" placeholder="Search" aria-label="Search" />
        </SearchBox>
        <WindowControls>
          <Avatar>XF</Avatar>
          <ControlButton aria-label="Minimize"><Svg w={12} sw={1.3}><path d="M0 6h12" /></Svg></ControlButton>
          <ControlButton $gap={26} aria-label="Restore"><Svg w={12} sw={1.3}><path d="M1 3.500h8V11H1zM3.500 3V1H11v8H9.500" /></Svg></ControlButton>
          <ControlButton $gap={27} aria-label="Close"><Svg w={12} sw={1.3}><path d="M1 1l10 10M11 1L1 11" /></Svg></ControlButton>
        </WindowControls>
      </TitleBar>

      <TabBar>
        <Tabs>
          {tabs.map(name => (
            <Tab key={name} $active={name === tab} onClick={() => setTab(name)}>{name}</Tab>
          ))}
        </Tabs>
        <TabActions>
          <ActionButton $w={84}><RecordIcon />Record</ActionButton>
          <ActionButton $w={155}><TeamsIcon />Present in Teams</ActionButton>
          <ActionButton $w={29} aria-label="Comments"><CommentIcon /></ActionButton>
          <ActionButton $w={85} $primary><ShareIcon />Share<Chevron /></ActionButton>
        </TabActions>
      </TabBar>

      <HomeRibbon />

      <Workspace>
        <ThumbList>
          {thumbs.map((Content, i) => (
            <ThumbItem key={i}>
              <ThumbNumber $active={i === current}>{i + 1}</ThumbNumber>
              <Thumb $dark={i === 0} $active={i === current} onClick={() => setCurrent(i)}><Content /></Thumb>
            </ThumbItem>
          ))}
        </ThumbList>
        <ScrollTrack $edge $right={4}>
          <Triangle />
          <ScrollThumb $h={246} $top={6} />
        </ScrollTrack>
        <Canvas>
          <Slide>
            <SlideTitle>讲座目录</SlideTitle>
            <Agenda>
              {agenda.map((item, i) => (
                <AgendaItem key={item.text} $line={item.line}>
                  <Badge $color={item.color}>{i + 1}</Badge>
                  <Mixed>{item.text}</Mixed>
                </AgendaItem>
              ))}
            </Agenda>
            <Advice><Mixed>{advice}</Mixed></Advice>
            <Watermark />
            <Pointer width="20" height="28" viewBox="0 0 20 28" aria-hidden="true">
              <path d="M8 0l3 3H5zM0 8l3-3v6zM16 8l-3-3v6zM7 4h2v3H7zM4 7h2v2H4zM10 7h2v2h-2z" fill="#1c1c1c" />
              <path d="M8 9v15l3-3 3 6 2-1-2-6h4z" fill="#fff" stroke="#1c1c1c" />
            </Pointer>
          </Slide>
          <Handle />
        </Canvas>
        <ScrollTrack $left={2}>
          <Triangle />
          <ScrollThumb $h={38} $top={42} />
          <ScrollArrows><Triangle down /><DoubleTriangle /><DoubleTriangle down /></ScrollArrows>
        </ScrollTrack>
      </Workspace>
    </Window>
  )
}

export default App
